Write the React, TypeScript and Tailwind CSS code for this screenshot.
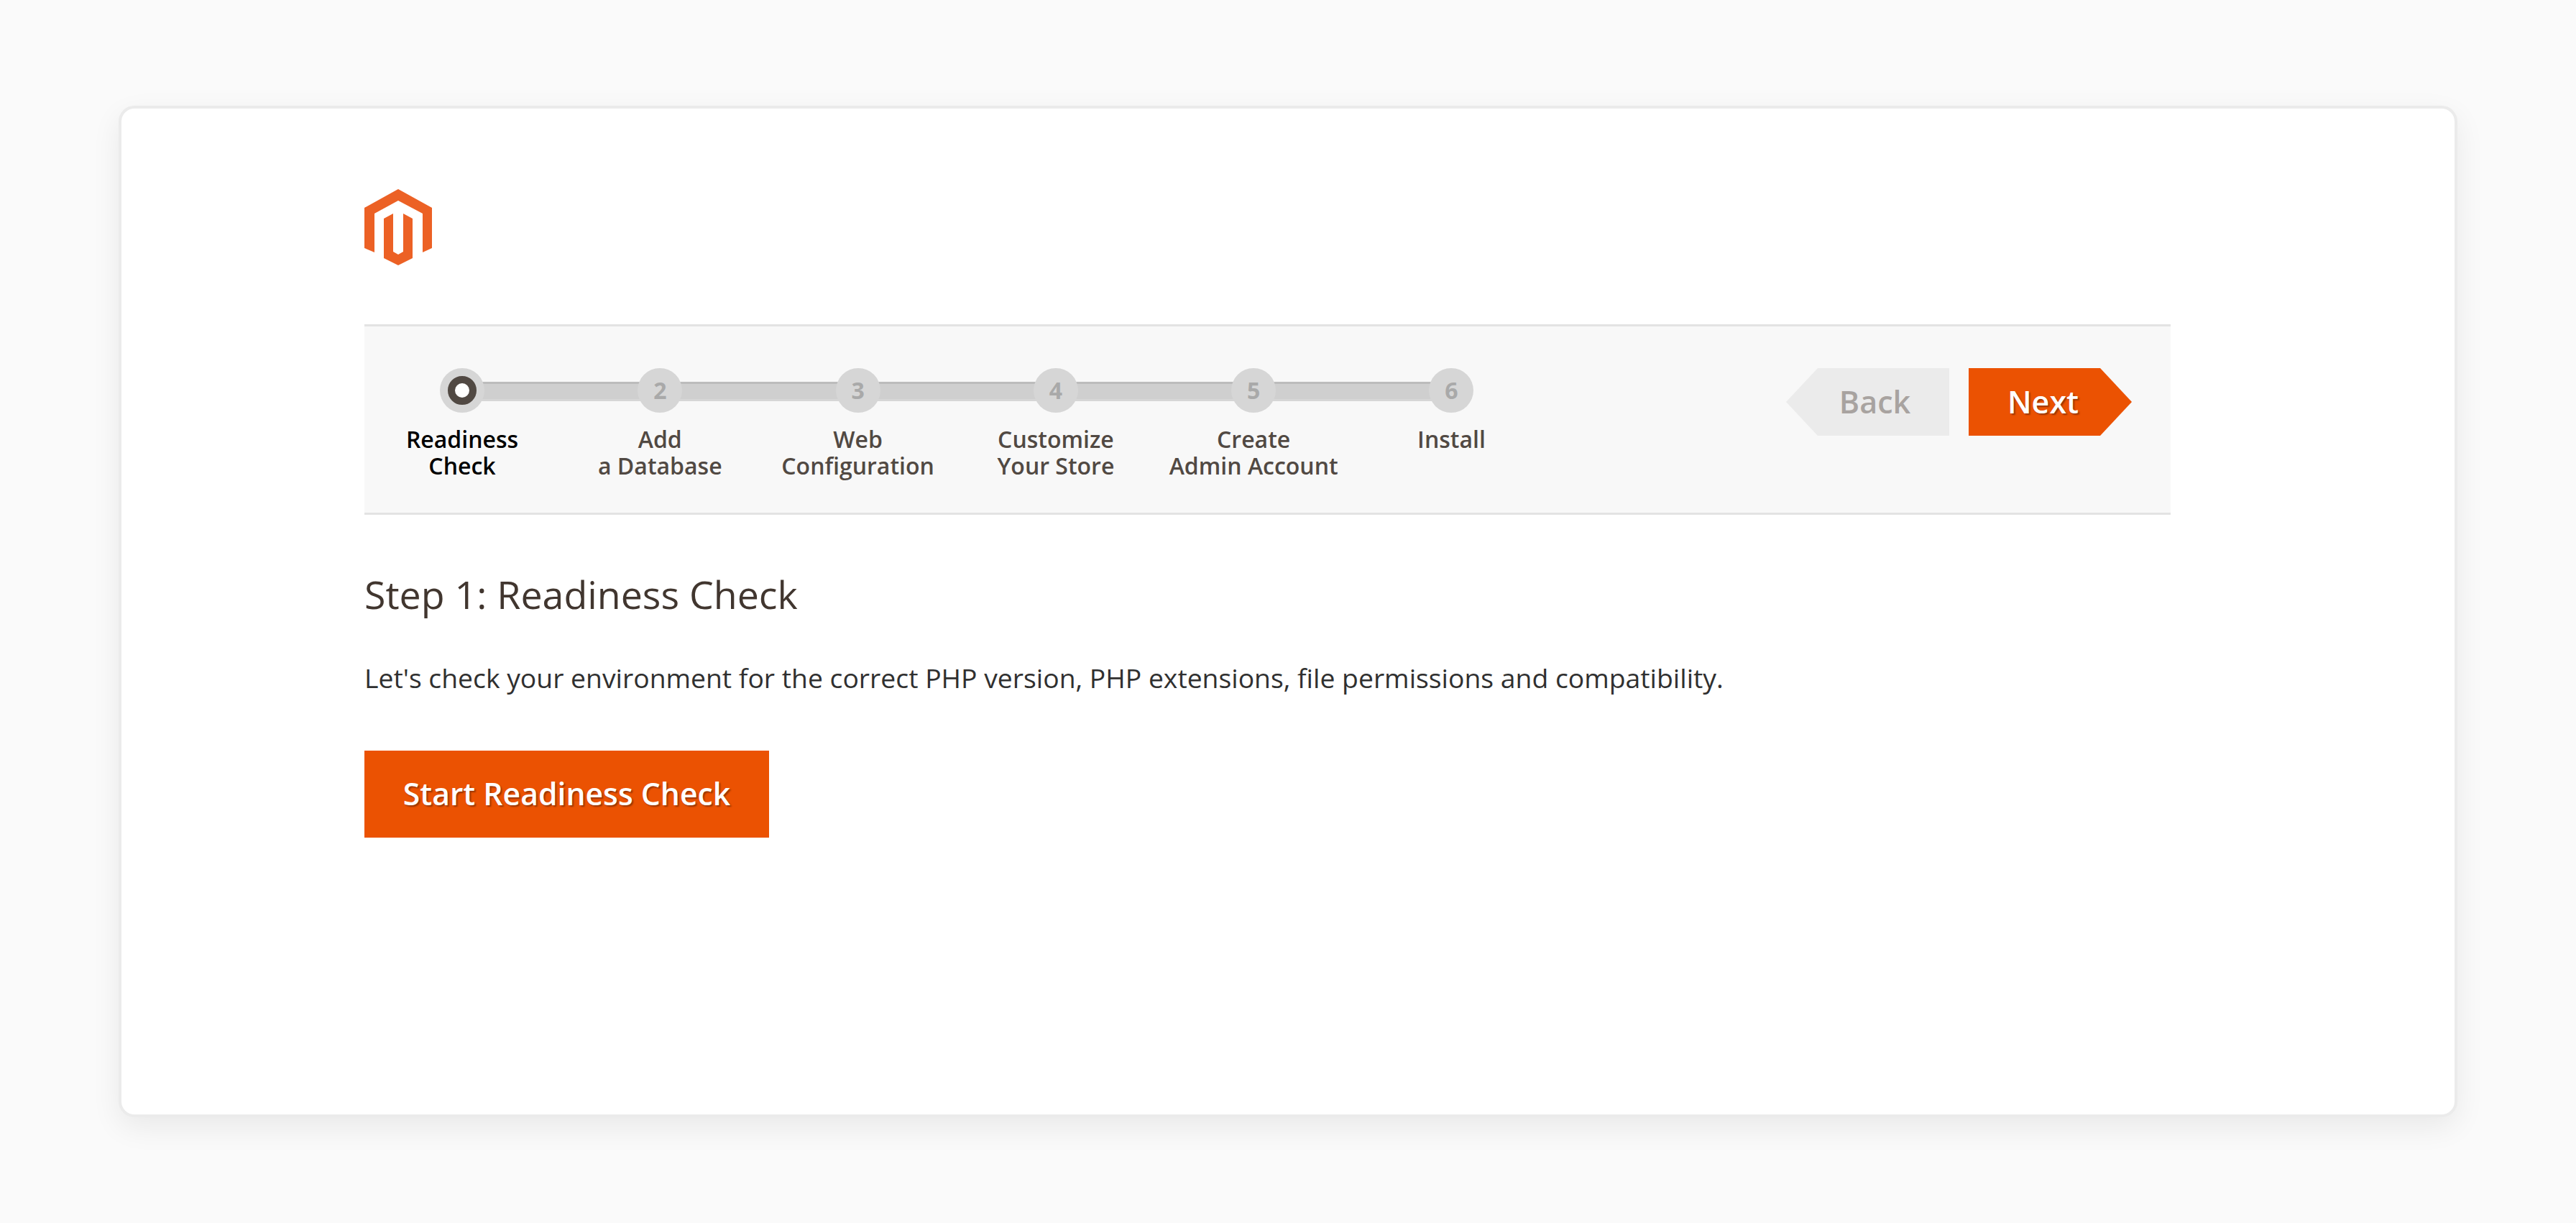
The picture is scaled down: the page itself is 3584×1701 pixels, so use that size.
const steps = [
  { num: 1, lines: ['Readiness', 'Check'] },
  { num: 2, lines: ['Add', 'a Database'] },
  { num: 3, lines: ['Web', 'Configuration'] },
  { num: 4, lines: ['Customize', 'Your Store'] },
  { num: 5, lines: ['Create', 'Admin Account'] },
  { num: 6, lines: ['Install'] },
];

function Logo() {
  return (
    <svg width="94" height="106" viewBox="0 0 94 106" className="block">
      <path
        fill="#ec6125"
        d="M47 0 94 26V82L81 88V34L47 16 14 34V88L0 82V26Z M27 41 40 34V87L47 91 54 87V34L67 41V96L47 106 27 96Z"
      />
    </svg>
  );
}

function Step({ num, lines }: { num: number; lines: string[] }) {
  const active = num === 1;
  return (
    <div className="w-[272px] flex flex-col items-center">
      <div className="relative w-[62px] h-[62px] rounded-full bg-[#d6d6d6] flex items-center justify-center">
        {active ? (
          <div className="w-[40px] h-[40px] rounded-full border-[10px] border-[#514943] bg-white" />
        ) : (
          <span className="text-[32px] leading-none font-bold text-[#a9a9a9]">{num}</span>
        )}
      </div>
      <div className={`mt-[18px] text-center text-[32px] leading-[37px] font-semibold ${active ? 'text-black' : 'text-[#514943]'}`}>
        {lines.map((line) => (
          <div key={line} className="whitespace-nowrap">{line}</div>
        ))}
      </div>
    </div>
  );
}

export default function App() {
  return (
    <div className="h-[1701px] bg-[#fafafa] pt-[147px] px-[165px] font-['Open_Sans',sans-serif] overflow-hidden">
      <div className="h-[1407px] bg-white border-4 border-[#ebebeb] rounded-[22px] shadow-[0_14px_40px_rgba(0,0,0,0.07)] pt-[112px] px-[338px]">
        <Logo />

        <div className="mt-[82px] w-[2513px] h-[265px] bg-[#f8f8f8] border-y-[3px] border-[#e3e3e3] pt-[58px] pr-[54px] flex justify-between items-start">
          <div className="relative flex gap-[3.3px]">
            <div className="absolute left-[136px] top-[19px] w-[1377px] h-[27px] bg-[#cfcfcf] border-t-[3px] border-t-[#bcbcbc] border-b-[3px] border-b-[#d6d6d6]" />
            {steps.map((s) => (
              <Step key={s.num} num={s.num} lines={s.lines} />
            ))}
          </div>

          <div className="flex gap-[27px]">
            <button className="w-[227px] h-[94px] bg-[#ebebeb] text-[#a8a3a0] text-[43px] font-semibold pl-[20px] [clip-path:polygon(44px_0,100%_0,100%_100%,44px_100%,0_50%)]">
              Back
            </button>
            <button className="w-[227px] h-[94px] bg-[#eb5202] text-white text-[43px] font-semibold pr-[20px] [text-shadow:2px_2px_2px_rgba(0,0,0,0.35)] [clip-path:polygon(0_0,183px_0,100%_50%,183px_100%,0_100%)]">
              Next
            </button>
          </div>
        </div>

        <h1 className="mt-[77px] text-[53.7px] leading-[68px] text-[#41362f]">Step 1: Readiness Check</h1>
        <p className="mt-[57px] text-[37.3px] leading-[50px] text-[#303030]">
          Let's check your environment for the correct PHP version, PHP extensions, file permissions and compatibility.
        </p>
        <button className="mt-[76px] block w-[563px] h-[121px] bg-[#eb5202] text-white text-[42.7px] font-semibold [text-shadow:2px_2px_2px_rgba(0,0,0,0.35)]">
          Start Readiness Check
        </button>
      </div>
    </div>
  );
}
